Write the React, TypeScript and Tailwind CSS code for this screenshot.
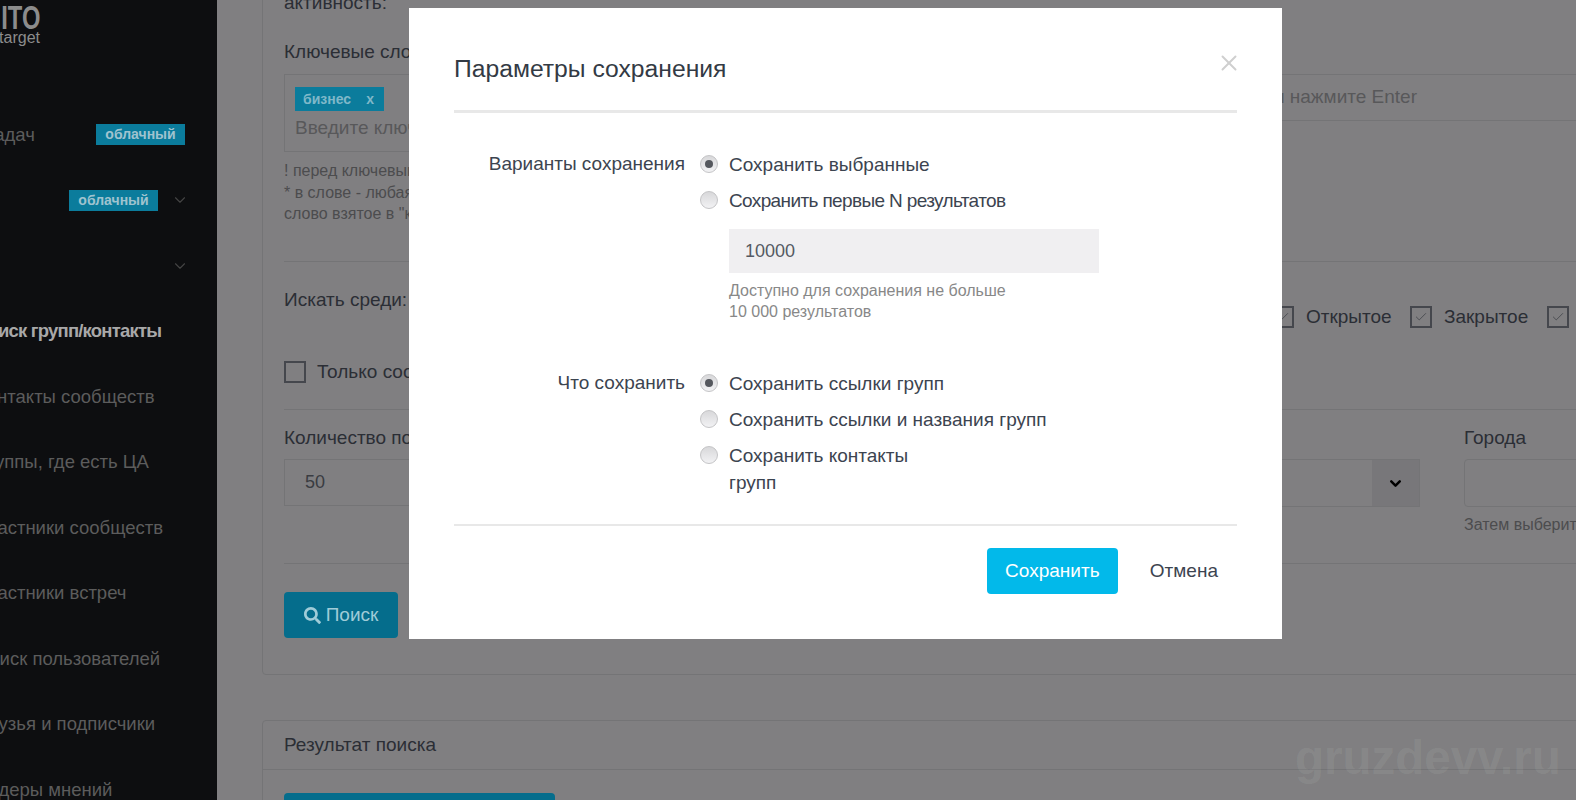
import { ChevronDown, Check, X } from 'lucide-react';
import { FaSearch } from 'react-icons/fa';

const subMenu = [
  'Контакты сообществ',
  'Группы, где есть ЦА',
  'Участники сообществ',
  'Участники встреч',
  'Поиск пользователей',
  'Друзья и подписчики',
  'Лидеры мнений',
];

const Badge = () => (
  <span className="flex h-[21px] w-[89px] items-center justify-center bg-[#0b7c9c] text-[14px] font-bold text-[#9fc3cf]">
    облачный
  </span>
);

const Sidebar = () => (
  <aside className="w-[217px] shrink-0 overflow-hidden bg-[#0d0e10] text-[18.5px] text-[#5c5c5c]">
    <div className="h-[102px] pt-[3px]">
      <div className="flex w-[40px] flex-col items-end text-[#8c8c8c]">
        <span className="origin-right scale-x-[0.72] text-[33px] leading-[30px] font-bold whitespace-nowrap">ITO</span>
        <span className="-mt-[1px] text-[16px] leading-[12px] whitespace-nowrap">target</span>
      </div>
    </div>
    <div className="flex h-[65px] items-center justify-between pr-[32px]">
      <span className="-ml-[17px]">Задач</span>
      <Badge />
    </div>
    <div className="flex h-[66px] items-center justify-end pr-[59px]">
      <Badge />
      <ChevronDown className="-mr-[31px] ml-[13px] h-[18px] w-[18px] text-[#444]" strokeWidth={1.5} />
    </div>
    <div className="flex h-[65px] items-center justify-end pr-[28px]">
      <ChevronDown className="h-[18px] w-[18px] text-[#444]" strokeWidth={1.5} />
    </div>
    <div className="-ml-[25px] flex h-[66px] items-center font-bold tracking-[-0.8px] whitespace-nowrap text-[#a8a8a8]">
      Поиск групп/контакты
    </div>
    {subMenu.map((item) => (
      <div key={item} className="-ml-[24px] flex h-[65.5px] items-center whitespace-nowrap">
        {item}
      </div>
    ))}
  </aside>
);

const Box = ({ checked }: { checked?: boolean }) => (
  <span className="flex h-[22px] w-[22px] shrink-0 items-center justify-center border-2 border-[#45474d]">
    {checked && <Check className="h-[14px] w-[14px] text-[#45474d]" strokeWidth={1.5} />}
  </span>
);

const Backdrop = () => (
  <main className="min-w-0 flex-1 overflow-hidden bg-[#807f81] pl-[45px] text-[19px] text-[#2b2e35]">
    <section className="-mt-[17px] h-[692px] w-[1400px] rounded border border-[#747476] pl-[21px]">
      <p className="h-[32px] leading-[38px]">активность:</p>
      <div className="h-[246px] border-b border-[#747476]">
        <div className="flex gap-[80px]">
          <div className="w-[536px] shrink-0">
            <div className="pt-[24px] leading-[24px]">Ключевые слова</div>
            <div className="mt-[10px] h-[78px] border border-[#747476] px-[10px] pt-[12px]">
              <span className="flex h-[24px] w-[89px] items-center justify-between bg-[#0b7c9c] pr-[10px] pl-[8px] text-[14px] font-bold text-[#7fb8c9]">
                бизнес <span>x</span>
              </span>
              <div className="mt-[3px] whitespace-nowrap text-[#58585a]">Введите ключевые слова и нажмите Enter</div>
            </div>
            <p className="mt-[8px] text-[16px] leading-[21.5px] text-[#4c4c4e]">
              ! перед ключевым словом исключает его из поиска
              <br />* в слове - любая последовательность символов
              <br />
              слово взятое в "кавычки" ищется точно
            </p>
          </div>
          <div className="w-[700px] shrink-0">
            <div className="pt-[24px] leading-[24px]">Минус-слова</div>
            <div className="mt-[10px] flex h-[47px] items-center justify-end border-y border-[#747476] pr-[183px] whitespace-nowrap text-[#58585a]">
              Введите минус-слова и нажмите Enter
            </div>
          </div>
        </div>
      </div>
      <div className="h-[148px] border-b border-[#747476]">
        <div className="flex pt-[26px]">
          <span className="w-[988px] leading-[24px]">Искать среди:</span>
          <span className="mt-[15px] flex w-[138px] items-center gap-[12px]">
            <Box checked />
            Открытое
          </span>
          <span className="mt-[15px] flex w-[137px] items-center gap-[12px]">
            <Box checked />
            Закрытое
          </span>
          <span className="mt-[15px] flex items-center">
            <Box checked />
          </span>
        </div>
        <div className="mt-[26px] flex items-center gap-[11px]">
          <Box />
          Только сообщества с контактами
        </div>
      </div>
      <div className="flex h-[154px] gap-[44px] border-b border-[#747476] pt-[16px]">
        <div className="w-[536px] shrink-0">
          <div className="leading-[24px]">Количество пользователей</div>
          <div className="mt-[9px] flex h-[47px] items-center border border-[#747476] px-[20px] text-[18px] text-[#3a3c42]">
            50
          </div>
        </div>
        <div className="w-[556px] shrink-0">
          <div className="leading-[24px]">Страна</div>
          <div className="mt-[9px] flex h-[48px] justify-end border border-[#747476]">
            <span className="flex w-[47px] items-center justify-center bg-[#78777a] text-black">
              <ChevronDown className="h-[17px] w-[17px]" strokeWidth={3.5} />
            </span>
          </div>
        </div>
        <div className="w-[400px] shrink-0">
          <div className="leading-[24px]">Города</div>
          <div className="mt-[9px] h-[48px] rounded-sm border border-[#747476]" />
          <p className="mt-[7px] text-[16px] leading-[21px] whitespace-nowrap text-[#4c4c4e]">Затем выберите город</p>
        </div>
      </div>
      <button className="mt-[28px] flex h-[46px] w-[114px] items-center justify-center gap-[5px] rounded-sm bg-[#056d8c] text-[#a0ccd8]">
        <FaSearch className="h-[17px] w-[17px]" />
        Поиск
      </button>
    </section>
    <section className="mt-[45px] h-[200px] w-[1400px] rounded border border-[#747476]">
      <div className="flex h-[49px] items-center border-b border-[#747476] pl-[21px]">Результат поиска</div>
      <button className="mt-[23px] ml-[21px] h-[46px] w-[271px] rounded-sm bg-[#056d8c]" />
    </section>
  </main>
);

const Radio = ({ checked }: { checked?: boolean }) => (
  <span className="mt-[9px] flex h-[18px] w-[18px] shrink-0 items-center justify-center rounded-full border border-[#c4c4c6] bg-linear-to-b from-[#d8d8da] to-[#f2f2f4]">
    {checked && <span className="h-[8px] w-[8px] rounded-full bg-[#55585e]" />}
  </span>
);

const Option = ({ label, checked, narrow }: { label: string; checked?: boolean; narrow?: boolean }) => (
  <label className="flex gap-[11px]">
    <Radio checked={checked} />
    <span className={narrow ? 'w-[340px] py-[4.5px] leading-[27px] tracking-[-0.63px]' : 'w-[340px] py-[4.5px] leading-[27px]'}>
      {label}
    </span>
  </label>
);

const SaveModal = () => (
  <div className="absolute top-[8px] left-[409px] h-[631px] w-[873px] bg-white text-[19px] text-[#3c4450]">
    <div className="relative mx-[45px] flex h-[105px] items-start border-b-[3px] border-[#e8e8e8] pt-[43px]">
      <h2 className="text-[24.7px] leading-[36px] text-[#333a44]">Параметры сохранения</h2>
      <X className="absolute top-[42px] -right-[5px] h-[26px] w-[26px] text-[#cfcfcf]" strokeWidth={1.8} />
    </div>
    <div className="flex h-[411px] pt-[33px]">
      <div className="w-[276px] text-right leading-[36px]">
        <div>Варианты сохранения</div>
        <div className="mt-[183px]">Что сохранить</div>
      </div>
      <div className="ml-[15px]">
        <Option label="Сохранить выбранные" checked />
        <Option label="Сохранить первые N результатов" narrow />
        <div className="mt-[11px] ml-[29px]">
          <div className="flex h-[44px] w-[370px] items-center bg-[#f0eff1] px-[16px] text-[18px] text-[#555a63]">10000</div>
          <p className="mt-[7px] text-[16px] leading-[21px] text-[#888]">
            Доступно для сохранения не больше
            <br />
            10 000 результатов
          </p>
        </div>
        <div className="mt-[43px]">
          <Option label="Сохранить ссылки групп" checked />
          <label className="flex gap-[11px]">
            <Radio />
            <span className="py-[4.5px] leading-[27px] whitespace-nowrap">Сохранить ссылки и названия групп</span>
          </label>
          <label className="flex gap-[11px]">
            <Radio />
            <span className="w-[200px] py-[4.5px] leading-[27px]">Сохранить контакты групп</span>
          </label>
        </div>
      </div>
    </div>
    <div className="mx-[45px] flex items-center justify-end border-t-2 border-[#e8e8e8] pt-[22px] pr-[19px]">
      <button className="h-[46px] w-[131px] rounded-sm bg-[#02b9ea] text-white">Сохранить</button>
      <button className="ml-[32px] text-[#3c4450]">Отмена</button>
    </div>
  </div>
);

export default function App() {
  return (
    <div className="relative flex h-[800px] w-[1576px] overflow-hidden font-['Liberation_Sans',Arial,sans-serif]">
      <Sidebar />
      <Backdrop />
      <SaveModal />
      <div className="absolute top-[728px] left-[1295px] text-[47.5px] leading-[60px] font-bold whitespace-nowrap text-white/8">
        gruzdevv.ru
      </div>
    </div>
  );
}
